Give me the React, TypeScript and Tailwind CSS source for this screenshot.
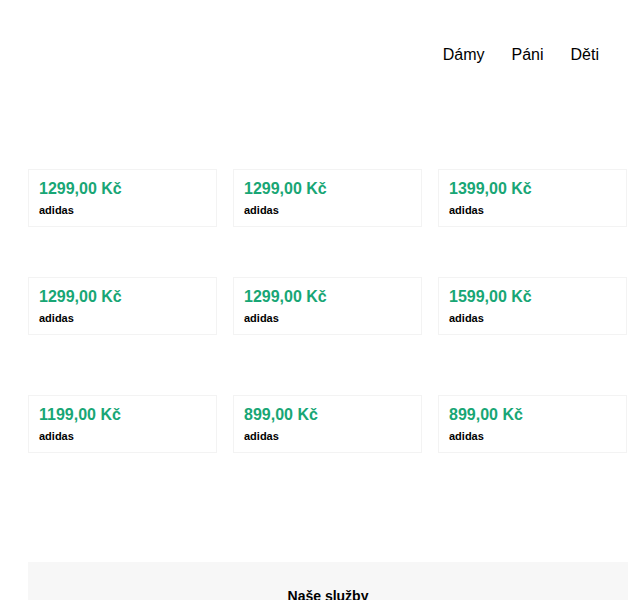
const products = [
  [
    { price: "1299,00 Kč", brand: "adidas" },
    { price: "1299,00 Kč", brand: "adidas" },
    { price: "1399,00 Kč", brand: "adidas" },
  ],
  [
    { price: "1299,00 Kč", brand: "adidas" },
    { price: "1299,00 Kč", brand: "adidas" },
    { price: "1599,00 Kč", brand: "adidas" },
  ],
  [
    { price: "1199,00 Kč", brand: "adidas" },
    { price: "899,00 Kč", brand: "adidas" },
    { price: "899,00 Kč", brand: "adidas" },
  ],
];

const rowSpacing = ["mt-[61px]", "mt-[50px]", "mt-[60px]"];

function ProductCard({ price, brand }: { price: string; brand: string }) {
  return (
    <div className="h-[58px] border border-[#f3f3f3] bg-white px-[10px] pt-[9px]">
      <div className="text-[16px] font-bold leading-[20px] text-[#18a675]">{price}</div>
      <div className="mt-[5px] text-[11px] font-bold leading-[13px] text-black">{brand}</div>
    </div>
  );
}

export default function App() {
  return (
    <div className="min-h-[600px] bg-white font-['Liberation_Sans',Arial,sans-serif] text-black">
      <div className="mx-[28px] w-[600px]">
        <header className="flex h-[108px] items-center justify-end pr-[29px] pt-[2px]">
          <nav className="flex gap-[27px] text-[16px] leading-[20px]">
            <a href="#">Dámy</a>
            <a href="#">Páni</a>
            <a href="#">Děti</a>
          </nav>
        </header>

        {products.map((row, i) => (
          <div key={i} className={`grid grid-cols-[189px_189px_189px] gap-[16px] ${rowSpacing[i]}`}>
            {row.map((p, j) => (
              <ProductCard key={j} price={p.price} brand={p.brand} />
            ))}
          </div>
        ))}

        <section className="mt-[109px] bg-[#f7f7f7] pt-[25px] pb-[40px]">
          <h2 className="text-center text-[14px] font-bold leading-[18px]">Naše služby</h2>
        </section>
      </div>
    </div>
  );
}
